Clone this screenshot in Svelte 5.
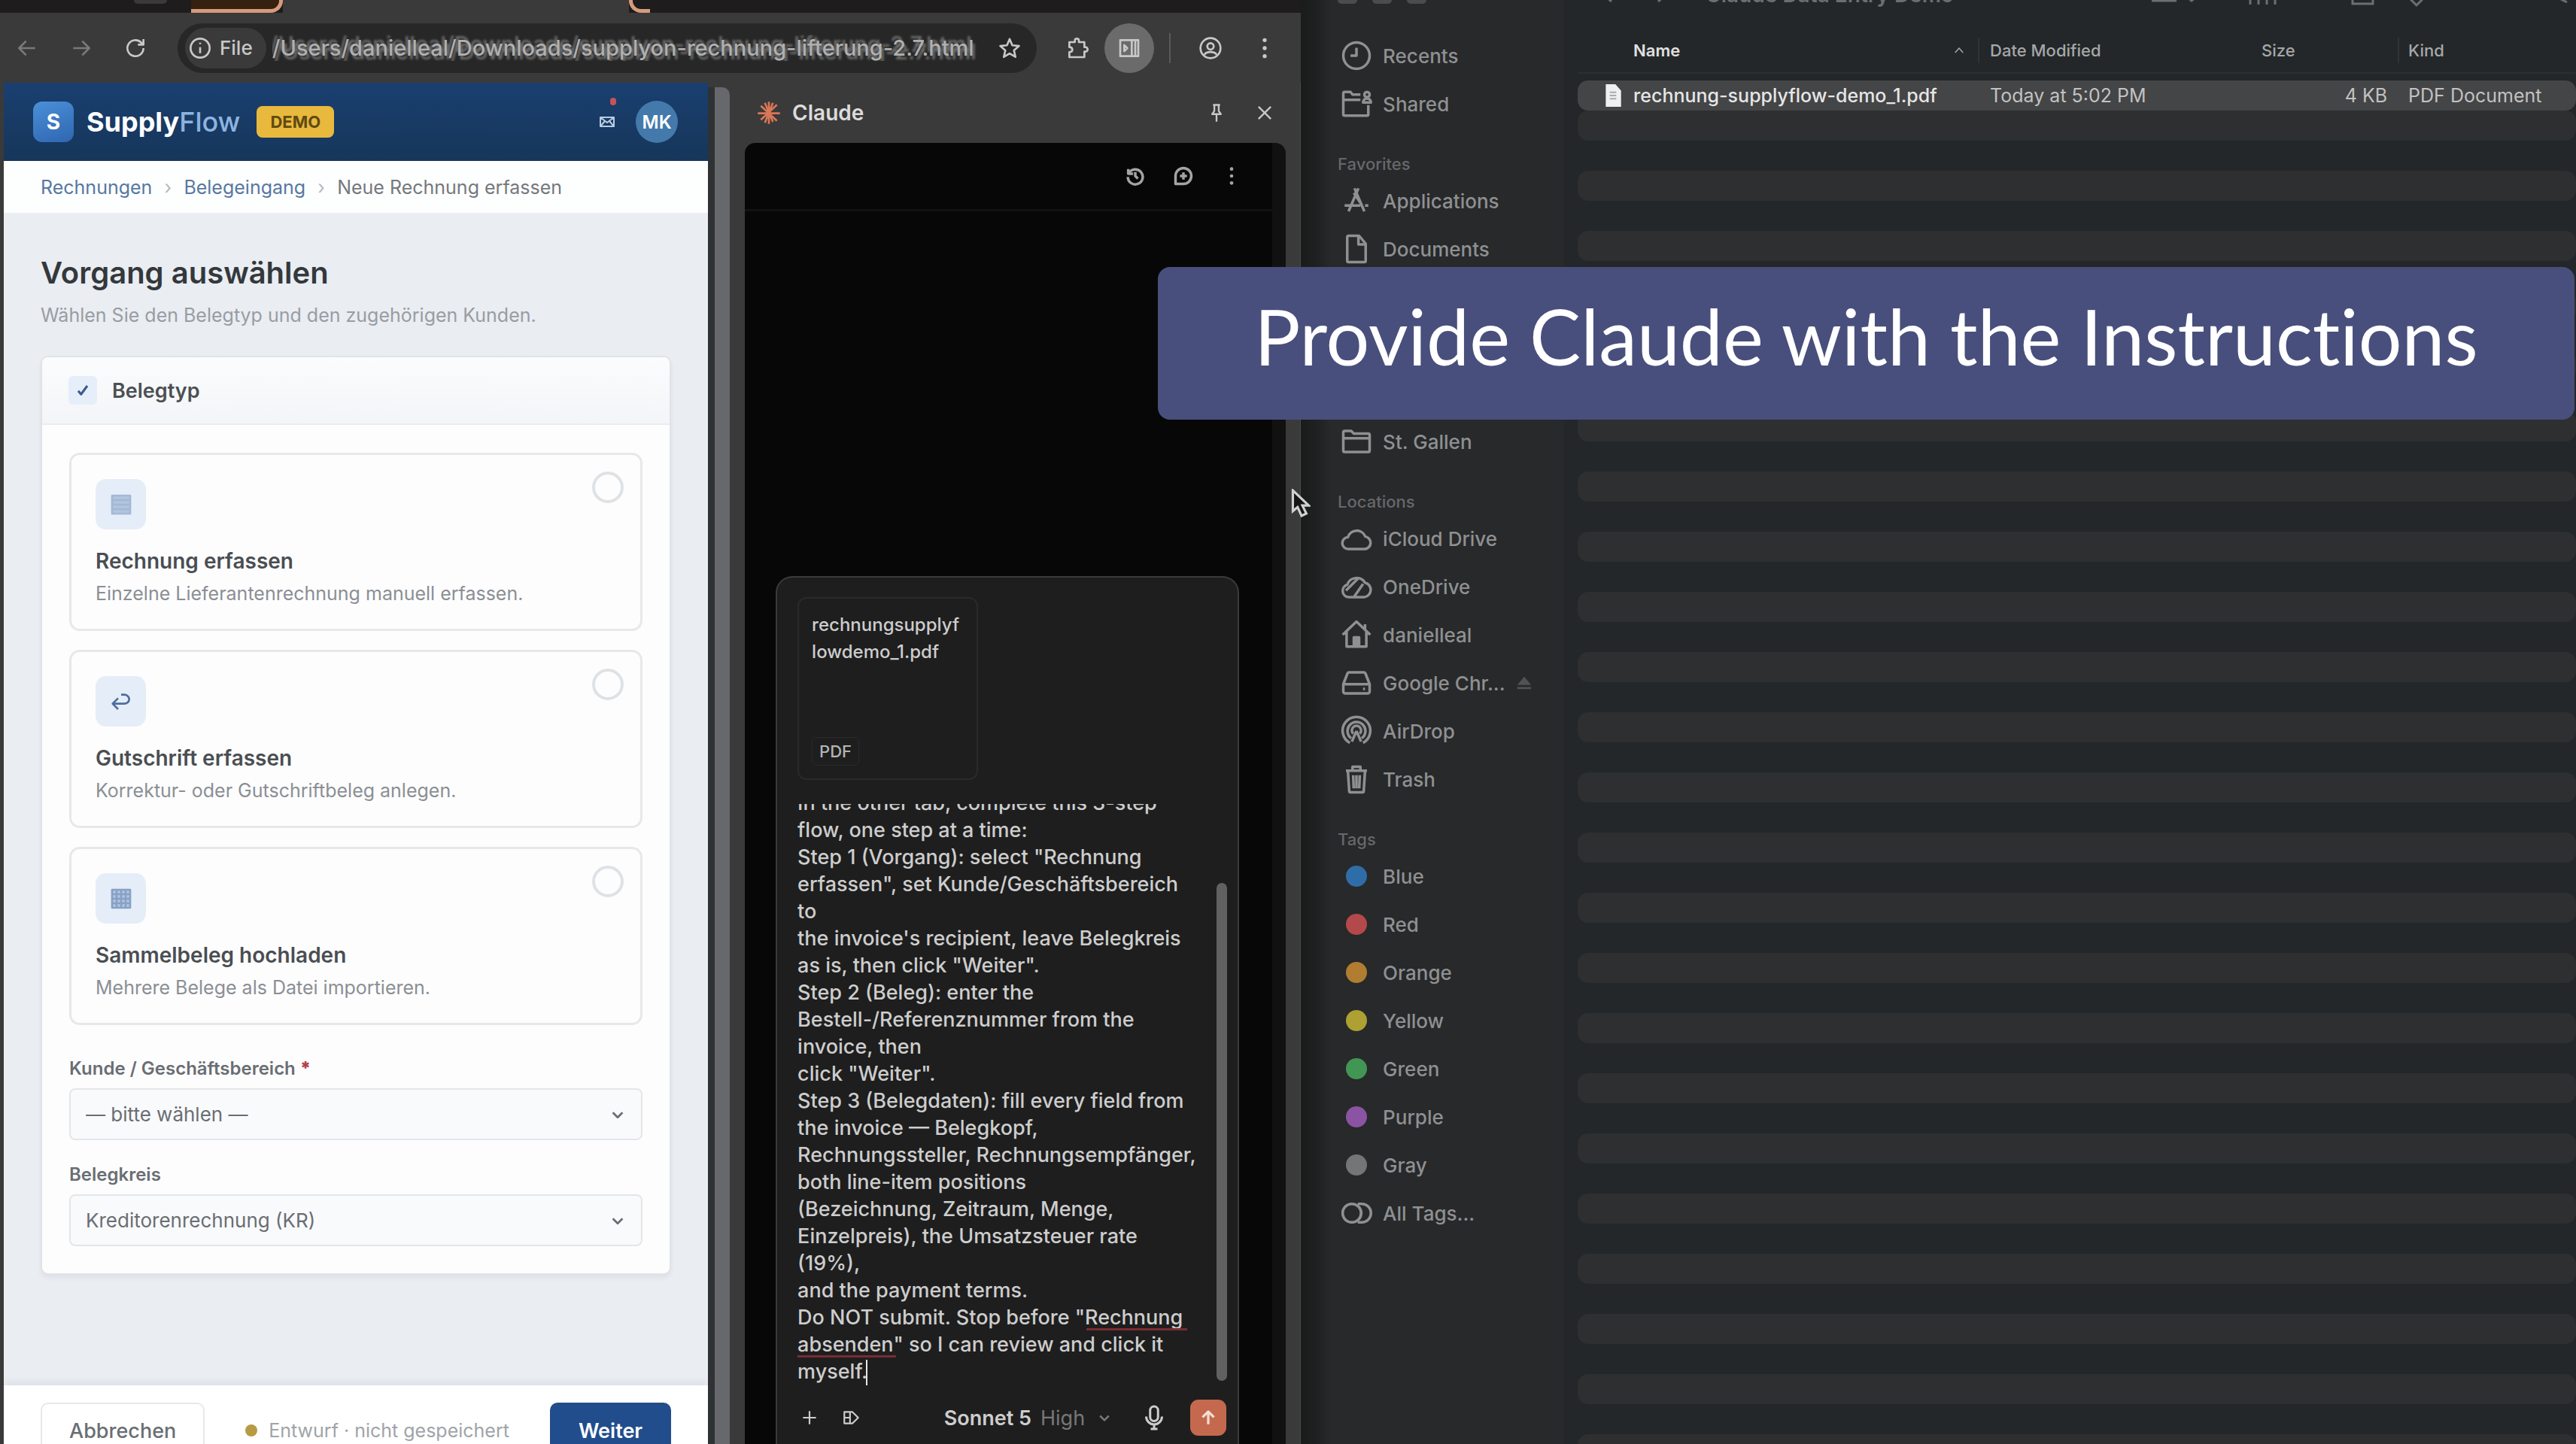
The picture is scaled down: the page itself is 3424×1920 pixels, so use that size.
<script lang="ts">
	import { onMount } from 'svelte';

	type Option = { id: string; title: string; text: string; icon: string };
	type Place = { label: string; icon: string; eject?: boolean };

	const options: Option[] = [
		{ id: 'rechnung', title: 'Rechnung erfassen', text: 'Einzelne Lieferantenrechnung manuell erfassen.', icon: 'lines' },
		{ id: 'gutschrift', title: 'Gutschrift erfassen', text: 'Korrektur- oder Gutschriftbeleg anlegen.', icon: 'return' },
		{ id: 'sammel', title: 'Sammelbeleg hochladen', text: 'Mehrere Belege als Datei importieren.', icon: 'grid' }
	];

	// 24x24 stroke icons
	const paths: Record<string, string> = {
		clock: 'M12 2a10 10 0 1 0 0 20a10 10 0 1 0 0-20M12 6v6H7.500',
		shared: 'M15 5H9L7.500 3H3a1 1 0 0 0-1 1v16a1 1 0 0 0 1 1h17a1 1 0 0 0 1-1v-7M2 9h13M20 3a2 2 0 1 0 0 4a2 2 0 1 0 0-4M17 11c0-4 6-4 6 0z',
		apps: 'M10.500 2.500L18 20M13.500 2.500L6 20M3 15.500h12M18.500 15.500H21M10 6l6 9',
		doc: 'M6 2h8l5 6v13a1 1 0 0 1-1 1H6a1 1 0 0 1-1-1V3a1 1 0 0 1 1-1zM13.500 2v6.500H19',
		folder: 'M3 4h5l2 2h11a1 1 0 0 1 1 1v12a1 1 0 0 1-1 1H3a1 1 0 0 1-1-1V5a1 1 0 0 1 1-1zM2 9.500h20',
		cloud: 'M6 20a4.500 4.500 0 0 1-.5-9a7 7 0 0 1 13.200-.5A4.800 4.800 0 0 1 18.500 20z',
		onedrive: 'M6 20a4.800 4.800 0 0 1-1-9.400A7.500 7.500 0 0 1 18.500 9A5.600 5.600 0 0 1 18 20zM4 15L13 6M10 20l7-10',
		home: 'M1.500 12L12 2l10.500 10M4.500 9.500V21h15V9.500M18.500 4v4M10 21v-7h4v7zM11 15h2v5h-2z',
		drive: 'M6.500 4h11a1.500 1.500 0 0 1 1.400 1L22 13v5.500a1.500 1.500 0 0 1-1.500 1.500h-17A1.500 1.500 0 0 1 2 18.500V13l3.100-8a1.500 1.500 0 0 1 1.400-1zM2.500 13h19M17 16.500h1.500',
		airdrop: 'M7 21a10.500 10.500 0 1 1 10 0M8 17.500a6.800 6.800 0 1 1 8 0M9.500 14a3.500 3.500 0 1 1 5 0M12 12l-3.500 8M12 12l3.500 8',
		trash: 'M4 5.500h16M9 5V2.500h6V5M5.500 6l1 15a1 1 0 0 0 1 1h9a1 1 0 0 0 1-1l1-15M9.500 9l.4 10M12 9v10M14.500 9l-.4 10',
		tags: 'M8.500 5a7 7 0 1 0 0 14a7 7 0 1 0 0-14M13 5h3a7 7 0 0 1 0 14h-3M14 7.500a7 7 0 0 1 0 9',
		back: 'M20 12H4M11 5l-7 7l7 7',
		forward: 'M4 12h16M13 5l7 7l-7 7',
		reload: 'M20 12a8 8 0 1 1-2.500-5.800L20 8.500M20 3v5.500h-5.500',
		info: 'M12 2.500a9.500 9.500 0 1 0 0 19a9.500 9.500 0 1 0 0-19M12 11v6M12 6.500v1.500',
		star: 'M12 3l2.700 6.200l6.700.6l-5.100 4.400l1.500 6.600L12 17.300l-5.800 3.500l1.500-6.600L2.600 9.800l6.700-.6z',
		puzzle: 'M4 6h5.500V4.500a2 2 0 0 1 4 0V6H19v5h1a2 2 0 0 1 0 4.500h-1V21H4v-5c4 0 4-5 0-5z',
		sidepanel: 'M3 4h18v16H3zM14.500 4v16M18 4v16M7 9v6l3-3z',
		person: 'M12 2a10 10 0 1 0 0 20a10 10 0 1 0 0-20M12 7a3.200 3.200 0 1 0 0 6.400A3.200 3.200 0 1 0 12 7M6 18.500c2-3.500 10-3.500 12 0',
		pin: 'M8 3h8M9.500 3v7L7 13.500h10L14.500 10V3M12 13.500V22',
		close: 'M5 5l14 14M19 5L5 19',
		history: 'M4 4v5.500h5.500M4.500 9a8.500 8.500 0 1 1-1 4M12 7.500V12l3 3',
		chat: 'M3 21V12a9 9 0 1 1 9 9zM12 8v8M8 12h8',
		plus: 'M12 4v16M4 12h16',
		label: 'M3 5h10l7 7l-7 7H3zM3 12h7M10 5v14',
		chevron: 'M5 9l7 7l7-7',
		caretUp: 'M5 16l7-8l7 8',
		mic: 'M12 2a3.500 3.500 0 0 1 3.500 3.500v6a3.500 3.500 0 0 1-7 0v-6A3.500 3.500 0 0 1 12 2zM5 11a7 7 0 0 0 14 0M12 18v4M9 22h6',
		up: 'M12 20V5M5 11.500L12 4.500l7 7',
		check: 'M4 13l5 6L20 4',
		return: 'M4 14h11a5 4.500 0 0 0 0-9h-3M9 8.500L3.500 14L9 19.500',
		lines: 'M3 3h18v18H3zM3 7.500h18M3 12h18M3 16.500h18',
		grid: 'M3 3h18v18H3zM3 7.500h18M3 12h18M3 16.500h18M7.500 3v18M12 3v18M16.500 3v18',
		mail: 'M3 6h18v12H3zM3 6l9 7l9-7M3 18l6-7M21 18l-6-7'
	};

	const recents: Place[] = [
		{ label: 'Recents', icon: 'clock' },
		{ label: 'Shared', icon: 'shared' }
	];
	const favorites: Place[] = [
		{ label: 'Applications', icon: 'apps' },
		{ label: 'Documents', icon: 'doc' },
		{ label: 'St. Gallen', icon: 'folder' }
	];
	const locations: Place[] = [
		{ label: 'iCloud Drive', icon: 'cloud' },
		{ label: 'OneDrive', icon: 'onedrive' },
		{ label: 'danielleal', icon: 'home' },
		{ label: 'Google Chr...', icon: 'drive', eject: true },
		{ label: 'AirDrop', icon: 'airdrop' },
		{ label: 'Trash', icon: 'trash' }
	];
	const tags = ['Blue', 'Red', 'Orange', 'Yellow', 'Green', 'Purple', 'Gray'];
	const emptyRows = Array.from({ length: 45 }, (_, i) => i);

	const instructions = `In the other tab, complete this 3-step
flow, one step at a time:
Step 1 (Vorgang): select "Rechnung
erfassen", set Kunde/Geschäftsbereich
to
the invoice's recipient, leave Belegkreis
as is, then click "Weiter".
Step 2 (Beleg): enter the
Bestell-/Referenznummer from the
invoice, then
click "Weiter".
Step 3 (Belegdaten): fill every field from
the invoice — Belegkopf,
Rechnungssteller, Rechnungsempfänger,
both line-item positions
(Bezeichnung, Zeitraum, Menge,
Einzelpreis), the Umsatzsteuer rate
(19%),
and the payment terms.
Do NOT submit. Stop before "Rechnung
absenden" so I can review and click it
myself.`;

	let prompt: HTMLTextAreaElement;

	onMount(() => {
		prompt.scrollTop = prompt.scrollHeight;
	});
</script>

{#snippet icon(name: string)}
	<svg class="icon" viewBox="0 0 24 24" aria-hidden="true"><path d={paths[name]} /></svg>
{/snippet}

{#snippet dots()}
	<svg class="icon solid" viewBox="0 0 24 24" aria-hidden="true">
		<circle cx="12" cy="4" r="2" /><circle cx="12" cy="12" r="2" /><circle cx="12" cy="20" r="2" />
	</svg>
{/snippet}

{#snippet places(list: Place[])}
	<ul>
		{#each list as place}
			<li>
				<a href="#place">
					{@render icon(place.icon)}
					<span>{place.label}</span>
					{#if place.eject}
						<svg class="eject" viewBox="0 0 24 24" aria-hidden="true"><path d="M12 3l10 12H2zM2 18h20v3H2z" /></svg>
					{/if}
				</a>
			</li>
		{/each}
	</ul>
{/snippet}

<div class="desktop">
	<section class="browser">
		<div class="tabstrip">
			<span class="tab-bubble"></span>
			<span class="tab-left"></span>
			<span class="tab-active"></span>
			<span class="tab-right"></span>
		</div>
		<div class="toolbar">
			<button class="tool dim" aria-label="Back">{@render icon('back')}</button>
			<button class="tool dim" aria-label="Forward">{@render icon('forward')}</button>
			<button class="tool" aria-label="Reload">{@render icon('reload')}</button>
			<div class="omnibox">
				<span class="scheme">{@render icon('info')}File</span>
				<input
					aria-label="Address"
					value="/Users/danielleal/Downloads/supplyon-rechnung-lifterung-2.7.html"
				/>
				<button class="tool" aria-label="Bookmark">{@render icon('star')}</button>
			</div>
			<button class="tool" aria-label="Extensions">{@render icon('puzzle')}</button>
			<button class="tool round" aria-label="Side panel">{@render icon('sidepanel')}</button>
			<span class="rule"></span>
			<button class="tool" aria-label="Profile">{@render icon('person')}</button>
			<button class="tool" aria-label="Menu">{@render dots()}</button>
		</div>

		<div class="content">
			<div class="page">
				<header class="app-header">
					<span class="logo">S</span>
					<span class="brand">Supply<em>Flow</em></span>
					<span class="badge">DEMO</span>
					<button class="inbox" aria-label="Postfach">{@render icon('mail')}<i></i></button>
					<span class="avatar">MK</span>
				</header>
				<nav class="crumbs">
					<a href="#rechnungen">Rechnungen</a>
					<span class="sep">›</span>
					<a href="#belegeingang">Belegeingang</a>
					<span class="sep">›</span>
					<span>Neue Rechnung erfassen</span>
				</nav>
				<main>
					<h1>Vorgang auswählen</h1>
					<p class="lead">Wählen Sie den Belegtyp und den zugehörigen Kunden.</p>
					<div class="card">
						<h2><span class="check">{@render icon('check')}</span>Belegtyp</h2>
						<div class="card-body">
							<div class="options">
								{#each options as option}
									<label class="option">
										<span class="option-main">
											<span class="tile {option.icon}">{@render icon(option.icon)}</span>
											<strong>{option.title}</strong>
											<small>{option.text}</small>
										</span>
										<input type="radio" name="belegtyp" value={option.id} />
									</label>
								{/each}
							</div>
							<label class="field-label" for="kunde">Kunde / Geschäftsbereich <b>*</b></label>
							<div class="select">
								<select id="kunde"><option>— bitte wählen —</option></select>
								{@render icon('chevron')}
							</div>
							<label class="field-label" for="kreis">Belegkreis</label>
							<div class="select">
								<select id="kreis"><option>Kreditorenrechnung (KR)</option></select>
								{@render icon('chevron')}
							</div>
						</div>
					</div>
				</main>
				<footer>
					<button class="btn">Abbrechen</button>
					<span class="status"><i></i>Entwurf · nicht gespeichert</span>
					<button class="btn primary">Weiter</button>
				</footer>
			</div>
			<div class="splitter"></div>
			<aside class="panel">
				<div class="panel-head">
					<svg class="spark" viewBox="0 0 24 24" aria-hidden="true">
						<path d="M12 1v22M1 12.500h22M4 5l16 15M20 4l-16 15M8 2l8 19M16 2L8 22" />
					</svg>
					<span class="panel-title">Claude</span>
					<button class="tool" aria-label="Pin">{@render icon('pin')}</button>
					<button class="tool" aria-label="Close">{@render icon('close')}</button>
				</div>
				<div class="chat">
					<div class="chat-bar">
						<button class="tool" aria-label="History">{@render icon('history')}</button>
						<button class="tool" aria-label="New chat">{@render icon('chat')}</button>
						<button class="tool" aria-label="More">{@render dots()}</button>
					</div>
					<div class="composer">
						<div class="attachment">
							<span>rechnungsupplyf<br />lowdemo_1.pdf</span>
							<span class="kind">PDF</span>
						</div>
						<div class="prompt">
							<textarea bind:this={prompt} aria-label="Message" spellcheck="false" value={instructions}></textarea>
							<span class="squiggle first"></span>
							<span class="squiggle second"></span>
							<span class="caret"></span>
							<span class="thumb"></span>
						</div>
						<div class="composer-bar">
							<button class="tool" aria-label="Add">{@render icon('plus')}</button>
							<button class="tool" aria-label="Skills">{@render icon('label')}</button>
							<button class="model">Sonnet 5 <span>High</span>{@render icon('chevron')}</button>
							<button class="tool mic" aria-label="Dictate">{@render icon('mic')}</button>
							<button class="send" aria-label="Send">{@render icon('up')}</button>
						</div>
					</div>
				</div>
			</aside>
		</div>
	</section>

	<section class="finder">
		<nav class="sidebar">
			<div class="lights"><i></i><i></i><i></i></div>
			{@render places(recents)}
			<h3>Favorites</h3>
			<div class="favorites">{@render places(favorites)}</div>
			<h3>Locations</h3>
			{@render places(locations)}
			<h3>Tags</h3>
			<ul>
				{#each tags as tag}
					<li><a href="#tag"><span class="dot {tag.toLowerCase()}"></span><span>{tag}</span></a></li>
				{/each}
				<li><a href="#tags">{@render icon('tags')}<span>All Tags...</span></a></li>
			</ul>
		</nav>
		<div class="files">
			<!-- scrolled past the top edge, only the lower ends stay visible -->
			<div class="titlebar">
				<svg class="arrows" viewBox="0 0 80 10" aria-hidden="true"><path d="M2-4l7 6M78-4l-7 6" /></svg>
				<span>Claude Data Entry Demo</span>
				<svg class="views" viewBox="0 0 564 10" aria-hidden="true">
					<path d="M0 1h33M48-3l5 4l5-4M131-8V6M142-8V6M153-8V6M164-8V6M267-8V5h27V-8M337-8l15 15l15-15M530-8l22 11" />
				</svg>
			</div>
			<table>
				<thead>
					<tr>
						<th class="name"><span>Name{@render icon('caretUp')}</span></th>
						<th class="date">Date Modified</th>
						<th class="size">Size</th>
						<th class="type"><span>Kind</span></th>
					</tr>
				</thead>
				<tbody>
					<tr class="selected">
						<td class="name">
							<span>
								<svg class="file" viewBox="0 0 20 28" aria-hidden="true">
									<path d="M1 0h12l7 8v20H1z" fill="#f0f0f0" />
									<path d="M6 10h8M6 14h8M6 18h8" stroke="#aaa" stroke-width="2" />
								</svg>rechnung-supplyflow-demo_1.pdf
							</span>
						</td>
						<td class="date">Today at 5:02 PM</td>
						<td class="size">4 KB</td>
						<td class="type">PDF Document</td>
					</tr>
					{#each emptyRows as row (row)}
						<tr><td colspan="4"></td></tr>
					{/each}
				</tbody>
			</table>
		</div>
	</section>

	<div class="banner">Provide Claude with the Instructions</div>
	<svg class="pointer" viewBox="0 0 24 36" aria-hidden="true">
		<path d="M2 2v26l6-5l5 11l6-3l-5-10h8z" />
	</svg>
</div>

<style>
	:global(body) {
		margin: 0;
		background: #232729;
	}

	.desktop {
		position: relative;
		display: flex;
		height: 100vh;
		overflow: hidden;
		font-family: Inter, 'Liberation Sans', sans-serif;
		font-size: 26px;
	}

	button,
	input,
	select,
	textarea {
		font: inherit;
		color: inherit;
		border: 0;
		background: none;
		padding: 0;
		margin: 0;
	}

	a {
		color: inherit;
		text-decoration: none;
	}

	.icon {
		flex: none;
		width: 32px;
		height: 32px;
		fill: none;
		stroke: currentColor;
		stroke-width: 2;
		stroke-linejoin: round;
	}

	.icon.solid {
		fill: currentColor;
		stroke: none;
	}

	/* Browser */
	.browser {
		flex: 0 0 50.5%;
		box-sizing: border-box;
		display: flex;
		flex-direction: column;
		background: #3a3a3a;
	}

	.tabstrip {
		flex: none;
		display: flex;
		height: 17px;
		background: #1e1c1c;
	}

	.tab-bubble {
		width: 44px;
		height: 5px;
		margin: 0 32px 0 178px;
		border-radius: 0 0 20px 20px;
		background: #3a3a3a;
	}

	.tab-left,
	.tab-active,
	.tab-right {
		box-sizing: border-box;
	}

	.tab-left {
		width: 122px;
		border: solid #d79a7b;
		border-width: 0 5px 5px 0;
		border-radius: 0 0 16px 0;
		background: #36200f;
	}

	.tab-active {
		width: 460px;
		background: #3a3a3a;
	}

	.tab-right {
		width: 28px;
		border: solid #d79a7b;
		border-width: 0 0 5px 5px;
		border-radius: 0 0 0 16px;
	}

	.toolbar {
		flex: none;
		display: flex;
		align-items: center;
		height: 93px;
		box-sizing: border-box;
		padding-right: 12px;
		color: #c8c8c8;
	}

	.tool {
		flex: none;
		display: flex;
		align-items: center;
		justify-content: center;
		width: 72px;
		height: 66px;
	}

	.tool.dim {
		color: #7a7a7a;
	}

	.omnibox {
		flex: 1;
		display: flex;
		align-items: center;
		height: 66px;
		margin: 0 18px 0 20px;
		border-radius: 33px;
		background: #272727;
	}

	.scheme {
		display: flex;
		align-items: center;
		gap: 10px;
		height: 54px;
		margin-left: 10px;
		padding: 0 18px 0 4px;
		border-radius: 27px;
		background: #3a3a3a;
		font-weight: 500;
	}

	.omnibox input {
		flex: 1;
		min-width: 0;
		height: 60px;
		margin-left: 8px;
		font-size: 29px;
		font-weight: 500;
		color: #b0b0b0;
		text-shadow: 3px 5px 3px #707070, -3px -5px 3px #707070;
	}

	.round {
		width: 66px;
		border-radius: 50%;
		background: #6b6b6b;
	}

	.rule {
		width: 2px;
		height: 40px;
		margin: 0 17px 0 20px;
		background: #5a5a5a;
	}

	.content {
		flex: 1;
		min-height: 0;
		display: flex;
		padding-left: 5px;
	}

	/* SupplyFlow page */
	.page {
		flex: 1;
		min-width: 0;
		display: flex;
		flex-direction: column;
		overflow: hidden;
		background: #eaedf2;
		color: #3c4043;
	}

	.app-header {
		flex: none;
		display: flex;
		align-items: center;
		height: 104px;
		box-sizing: border-box;
		padding: 0 40px 0 39px;
		background: linear-gradient(#1a3f70, #16365a);
		color: #fff;
	}

	.logo {
		display: flex;
		align-items: center;
		justify-content: center;
		width: 54px;
		height: 54px;
		border-radius: 12px;
		background: linear-gradient(160deg, #4a90d9, #2f66b0);
		font-size: 28px;
		font-weight: 700;
	}

	.brand {
		margin: 0 22px 0 17px;
		font-size: 36px;
		font-weight: 700;
	}

	.brand em {
		font-style: normal;
		font-weight: 500;
		color: #8db4e0;
	}

	.badge {
		padding: 0 18px;
		border-radius: 8px;
		background: #e8b93c;
		color: #5f4a12;
		font-size: 22px;
		line-height: 42px;
		font-weight: 700;
	}

	.inbox {
		position: relative;
		display: flex;
		margin-left: auto;
		margin-right: 26px;
		color: #b9cbe0;
	}

	.inbox .icon {
		width: 24px;
		height: 24px;
	}

	.inbox i {
		position: absolute;
		top: -20px;
		right: 0;
		width: 8px;
		height: 10px;
		border-radius: 5px;
		background: #c8525a;
	}

	.avatar {
		display: flex;
		align-items: center;
		justify-content: center;
		width: 56px;
		height: 56px;
		border-radius: 50%;
		background: #4479ab;
		font-size: 24px;
		font-weight: 600;
	}

	.crumbs {
		flex: none;
		display: flex;
		align-items: center;
		gap: 15px;
		height: 69px;
		padding: 0 49px;
		background: #fdfefe;
		font-size: 25px;
		color: #75797d;
	}

	.crumbs a {
		color: #5878a2;
	}

	.crumbs .sep {
		color: #b3b8bd;
		width: 12px;
		text-align: center;
	}

	main {
		flex: 1;
		padding: 56px 49px 0;
	}

	h1 {
		margin: 0 0 16px;
		font-size: 40px;
		line-height: 48px;
		font-weight: 600;
		color: #33383c;
	}

	.lead {
		margin: 0 0 38px;
		font-size: 25px;
		line-height: 32px;
		color: #989da3;
	}

	.card {
		box-sizing: border-box;
		border: 2px solid #e0e3e6;
		border-radius: 10px;
		background: #fdfdfe;
		box-shadow: 0 4px 6px rgba(40, 50, 60, 0.06);
	}

	h2 {
		display: flex;
		align-items: center;
		gap: 20px;
		height: 88px;
		margin: 0;
		padding: 0 35px;
		border-bottom: 2px solid #eaecee;
		border-radius: 8px 8px 0 0;
		background: linear-gradient(#fafcfd, #f4f5f8);
		font-size: 27px;
		font-weight: 600;
		color: #4c5054;
	}

	.check {
		display: flex;
		align-items: center;
		justify-content: center;
		width: 38px;
		height: 38px;
		border-radius: 6px;
		background: #e6eefa;
		color: #3c5a8c;
	}

	.check .icon {
		width: 18px;
		height: 18px;
		stroke-width: 4;
	}

	.card-body {
		display: flex;
		flex-direction: column;
		padding: 37px 36px 36px;
	}

	.options {
		display: flex;
		flex-direction: column;
		gap: 25px;
		margin-bottom: 12px;
	}

	.option {
		display: flex;
		align-items: flex-start;
		padding: 22px 22px 32px 32px;
		border: 3px solid #e6e8ea;
		border-radius: 14px;
	}

	.option-main {
		flex: 1;
		display: flex;
		flex-direction: column;
		padding-top: 10px;
	}

	.tile {
		display: flex;
		align-items: center;
		justify-content: center;
		width: 67px;
		height: 67px;
		margin-bottom: 25px;
		border-radius: 14px;
		background: #e5edf8;
		color: #4d6d9b;
	}

	.tile.lines {
		color: #a3b8d6;
	}

	.tile.grid {
		color: #87a1c6;
	}

	.lines .icon,
	.grid .icon {
		fill: #b3c5de;
	}

	.option strong {
		margin-bottom: 11px;
		font-size: 28px;
		line-height: 34px;
		font-weight: 600;
		color: #4a4e52;
	}

	.option small {
		font-size: 25px;
		line-height: 30px;
		color: #8b8f94;
	}

	.option input {
		appearance: none;
		width: 42px;
		height: 42px;
		border: 4px solid #dfe2e5;
		border-radius: 50%;
	}

	.field-label {
		margin: 32px 0 12px;
		font-size: 24px;
		line-height: 28px;
		font-weight: 600;
		color: #6a6e73;
	}

	.field-label b {
		color: #b0434c;
	}

	.select {
		display: flex;
		align-items: center;
		height: 65px;
		padding-right: 20px;
		border: 2px solid #e4e6e9;
		border-radius: 8px;
		background: #f9fafc;
		color: #6a6e73;
	}

	.select select {
		flex: 1;
		height: 100%;
		appearance: none;
		padding-left: 20px;
		font-size: 26px;
	}

	.select .icon {
		width: 22px;
		height: 22px;
		stroke-width: 3;
	}

	footer {
		flex: none;
		display: flex;
		align-items: flex-start;
		justify-content: space-between;
		height: 78px;
		box-sizing: border-box;
		padding: 23px 49px 0;
		background: #fff;
		box-shadow: 0 -6px 8px rgba(40, 40, 50, 0.05);
	}

	.btn {
		height: 74px;
		padding: 0 36px;
		border: 2px solid #e6e8ea;
		border-radius: 10px;
		font-size: 27px;
		font-weight: 500;
		color: #6a6e73;
	}

	.btn.primary {
		border-color: #214d8c;
		background: #214d8c;
		color: #fff;
		font-weight: 600;
	}

	.status {
		display: flex;
		align-items: center;
		gap: 15px;
		height: 74px;
		font-size: 25px;
		color: #a0a4a9;
	}

	.status i {
		width: 16px;
		height: 16px;
		border-radius: 50%;
		background: #b89a45;
	}

	.splitter {
		width: 20px;
		margin-top: 6px;
		border-left: 9px solid #2e3235;
		border-radius: 0 10px 0 0;
		background: #66686b;
	}

	/* Claude side panel */
	.panel {
		flex: 0 0 759px;
		box-sizing: border-box;
		display: flex;
		flex-direction: column;
		padding: 0 19px 0 20px;
		border-right: 1px solid #4a4a4a;
	}

	.panel-head {
		flex: none;
		display: flex;
		align-items: center;
		height: 80px;
		padding-left: 16px;
		color: #c8c8c8;
	}

	.spark {
		width: 32px;
		height: 32px;
		margin-right: 15px;
		stroke: #d97757;
		stroke-width: 2;
	}

	.panel-title {
		flex: 1;
		font-size: 28px;
		font-weight: 600;
		color: #dcdcdc;
	}

	.panel-head .tool {
		width: 64px;
	}

	.panel-head .icon {
		width: 28px;
		height: 28px;
	}

	.panel-head .tool:last-child {
		margin-right: -4px;
	}

	.chat {
		flex: 1;
		min-height: 0;
		display: flex;
		flex-direction: column;
		border-right: 18px solid #111;
		border-radius: 14px 14px 0 0;
		background: #070707;
	}

	.chat-bar {
		flex: none;
		display: flex;
		align-items: center;
		justify-content: flex-end;
		height: 88px;
		padding-right: 22px;
		border-bottom: 3px solid #111;
		color: #a4a4a4;
	}

	.chat-bar .tool {
		width: 64px;
	}

	.chat-bar .icon {
		width: 28px;
		height: 28px;
		stroke-width: 3;
	}

	.composer {
		display: flex;
		flex-direction: column;
		margin: auto 44px 0 41px;
		padding: 26px 14px 0 27px;
		border: 2px solid #3b3b3b;
		border-bottom: 0;
		border-radius: 22px 22px 0 0;
		background: #1e1e1e;
		color: #cdcdcd;
	}

	.attachment {
		display: flex;
		flex-direction: column;
		justify-content: space-between;
		align-items: flex-start;
		width: 240px;
		height: 243px;
		box-sizing: border-box;
		padding: 17px;
		border: 2px solid #2a2a2a;
		border-radius: 12px;
		font-size: 24px;
		line-height: 36px;
		font-weight: 500;
	}

	.kind {
		padding: 0 9px;
		border: 1px solid #2a2a2a;
		border-radius: 6px;
		font-size: 22px;
		color: #b4b4b4;
	}

	.prompt {
		position: relative;
		display: flex;
		margin-top: 32px;
	}

	.prompt textarea {
		flex: 1;
		height: 773px;
		resize: none;
		overflow: hidden;
		white-space: pre;
		font-size: 27px;
		line-height: 36px;
		font-weight: 500;
	}

	.prompt .thumb {
		align-self: flex-end;
		width: 14px;
		height: 662px;
		margin-bottom: 6px;
		border-radius: 7px;
		background: #616161;
	}

	.squiggle {
		position: absolute;
		height: 3px;
		background: #7a2c34;
	}

	.squiggle.first {
		left: 384px;
		bottom: 73px;
		width: 134px;
	}

	.squiggle.second {
		left: 0;
		bottom: 37px;
		width: 131px;
	}

	.caret {
		position: absolute;
		left: 91px;
		bottom: 0;
		width: 2px;
		height: 34px;
		background: #e6e6e6;
	}

	.composer-bar {
		display: flex;
		align-items: center;
		padding: 19px 1px 11px 0;
	}

	.composer-bar .tool {
		width: 32px;
		height: 48px;
		margin-right: 24px;
	}

	.composer-bar .icon {
		width: 26px;
		height: 26px;
	}

	.model {
		display: flex;
		align-items: center;
		gap: 12px;
		margin-left: auto;
		font-size: 27px;
		font-weight: 600;
	}

	.model span,
	.model .icon {
		font-weight: 400;
		color: #777;
	}

	.model .icon {
		width: 20px;
		height: 20px;
		margin-left: 4px;
		stroke-width: 3;
	}

	.composer-bar .mic {
		margin: 0 32px 0 40px;
	}

	.mic .icon {
		width: 36px;
		height: 36px;
	}

	.send {
		display: flex;
		align-items: center;
		justify-content: center;
		width: 48px;
		height: 48px;
		border-radius: 11px;
		background: #c4694d;
		color: #f4ddd4;
	}

	.send .icon {
		stroke-width: 3;
	}

	/* Finder */
	.finder {
		flex: 1;
		min-width: 0;
		display: flex;
		background: #232729;
		color: #8f9092;
	}

	.sidebar {
		flex: 0 0 350px;
		box-sizing: border-box;
		padding-left: 49px;
		background: linear-gradient(to right, #1a1c1b, #1e2022 22px, #27292a 40px);
		font-weight: 500;
	}

	.lights {
		display: flex;
		gap: 20px;
		height: 5px;
		padding-bottom: 37px;
	}

	.lights i {
		width: 26px;
		height: 5px;
		border-radius: 0 0 13px 13px;
		background: #4a4c4d;
	}

	ul {
		margin: 0;
		padding: 0;
		list-style: none;
	}

	li a {
		display: flex;
		align-items: center;
		gap: 14px;
		height: 64px;
		padding-left: 4px;
	}

	li .icon,
	.dot {
		width: 42px;
		height: 42px;
	}

	.dot {
		flex: none;
		box-sizing: border-box;
		border: 7px solid transparent;
		border-radius: 50%;
		background-clip: padding-box;
	}

	.blue { background-color: #2e6da8; }
	.red { background-color: #b3494a; }
	.orange { background-color: #b17d30; }
	.yellow { background-color: #aea032; }
	.green { background-color: #429653; }
	.purple { background-color: #8a54a2; }
	.gray { background-color: #737576; }

	.eject {
		width: 22px;
		height: 22px;
		fill: #505254;
	}

	/* the banner lies over the middle of this list */
	.favorites li:last-child {
		padding-top: 192px;
	}

	h3 {
		margin: 0;
		padding-top: 31px;
		font-size: 22px;
		line-height: 34px;
		font-weight: 500;
		color: #66686a;
	}

	.files {
		flex: 1;
		min-width: 0;
		padding-left: 18px;
	}

	.titlebar {
		display: flex;
		align-items: flex-end;
		height: 10px;
		padding-left: 36px;
		overflow: hidden;
		font-size: 28px;
		line-height: 34px;
		font-weight: 600;
		color: #6c6f71;
	}

	.titlebar svg {
		height: 10px;
		fill: none;
		stroke: #6c6f71;
		stroke-width: 3;
	}

	.arrows {
		width: 80px;
		margin-right: 54px;
	}

	.views {
		width: 564px;
		margin-left: auto;
	}

	table {
		width: 100%;
		table-layout: fixed;
		border-collapse: separate;
		border-spacing: 0;
	}

	th {
		height: 88px;
		padding: 40px 0 0;
		box-sizing: border-box;
		border-bottom: 2px solid #2c2f31;
		vertical-align: top;
		text-align: left;
		font-size: 22px;
		line-height: 34px;
		font-weight: 500;
		color: #a5a7a8;
	}

	th.name {
		color: #e0e0e0;
		font-weight: 600;
	}

	th.name span {
		display: flex;
		align-items: center;
		justify-content: space-between;
		padding: 0 16px 0 74px;
		border-right: 2px solid #303436;
	}

	th.type span {
		display: block;
		padding-left: 12px;
		border-left: 2px solid #303436;
	}

	th .icon {
		width: 18px;
		height: 18px;
		color: #a5a7a8;
	}

	tbody::before {
		content: '';
		display: block;
		height: 9px;
	}

	td {
		height: 40px;
		padding: 0;
		box-sizing: border-box;
		font-size: 25px;
		line-height: 40px;
		white-space: nowrap;
	}

	tbody tr:nth-child(even) td {
		border-radius: 14px;
		background: #2d2f30;
	}

	.selected td {
		background: #444546;
		color: #c2c2c2;
	}

	.selected td:first-child {
		border-radius: 14px 0 0 14px;
		color: #e6e6e6;
		font-weight: 500;
	}

	.selected td:last-child {
		border-radius: 0 14px 14px 0;
	}

	.name {
		width: 534px;
	}

	.date {
		width: 300px;
	}

	th.date,
	td.date {
		padding-left: 14px;
	}

	.size {
		width: 256px;
	}

	th.size {
		padding-left: 75px;
	}

	td.size {
		padding-right: 14px;
		text-align: right;
	}

	td.type {
		padding-left: 14px;
	}

	td.name span {
		display: flex;
		align-items: center;
		gap: 15px;
		padding-left: 35px;
	}

	.file {
		width: 24px;
		height: 30px;
	}

	/* Caption over both windows */
	.banner {
		position: absolute;
		top: 355px;
		right: 2px;
		width: 55%;
		height: 203px;
		border-radius: 16px;
		background: #484f7c;
		color: #fff;
		font-family: Lato, sans-serif;
		font-size: 102px;
		line-height: 184px;
		font-variant-ligatures: none;
		text-align: center;
		white-space: nowrap;
	}

	.pointer {
		position: absolute;
		top: 650px;
		left: 1716px;
		width: 26px;
		height: 38px;
		fill: #151515;
		stroke: #d0d0d0;
		stroke-width: 3;
	}
</style>
